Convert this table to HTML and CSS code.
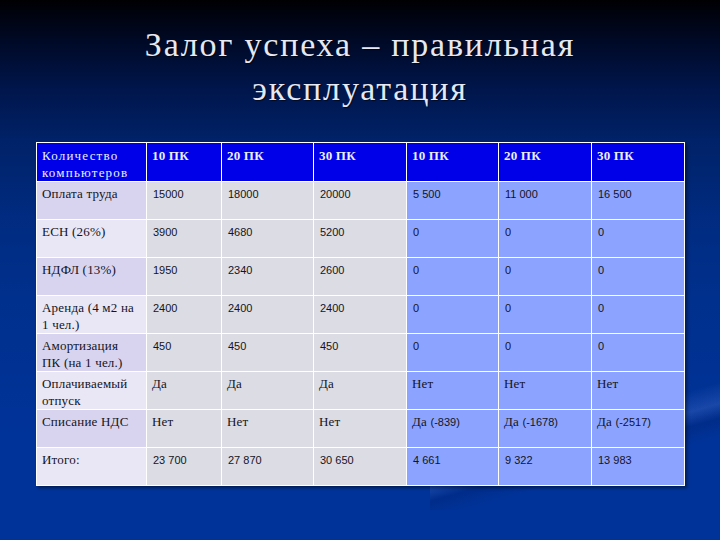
FILE: index.html
```html
<!DOCTYPE html>
<html lang="ru">
<head>
<meta charset="utf-8">
<link rel="stylesheet" href="styles.css">
</head>
<body>
<div class="slide">
  <h1 class="title">Залог успеха – правильная<br>эксплуатация</h1>
  <table class="grid">
    <colgroup>
      <col class="c1"><col class="c2"><col class="c3"><col class="c4"><col class="c5"><col class="c6"><col class="c7">
    </colgroup>
    <tr class="head">
      <td class="lab">Количество<br>компьютеров</td>
      <td>10 ПК</td><td>20 ПК</td><td>30 ПК</td><td>10 ПК</td><td>20 ПК</td><td>30 ПК</td>
    </tr>
    <tr class="odd">
      <td class="lab">Оплата труда</td>
      <td class="num">15000</td><td class="num">18000</td><td class="num">20000</td>
      <td class="alt num">5 500</td><td class="alt num">11 000</td><td class="alt num">16 500</td>
    </tr>
    <tr class="even">
      <td class="lab">ЕСН (26%)</td>
      <td class="num">3900</td><td class="num">4680</td><td class="num">5200</td>
      <td class="alt num">0</td><td class="alt num">0</td><td class="alt num">0</td>
    </tr>
    <tr class="odd">
      <td class="lab">НДФЛ (13%)</td>
      <td class="num">1950</td><td class="num">2340</td><td class="num">2600</td>
      <td class="alt num">0</td><td class="alt num">0</td><td class="alt num">0</td>
    </tr>
    <tr class="even">
      <td class="lab">Аренда (4 м2 на<br>1 чел.)</td>
      <td class="num">2400</td><td class="num">2400</td><td class="num">2400</td>
      <td class="alt num">0</td><td class="alt num">0</td><td class="alt num">0</td>
    </tr>
    <tr class="odd">
      <td class="lab">Амортизация<br>ПК (на 1 чел.)</td>
      <td class="num">450</td><td class="num">450</td><td class="num">450</td>
      <td class="alt num">0</td><td class="alt num">0</td><td class="alt num">0</td>
    </tr>
    <tr class="even">
      <td class="lab">Оплачиваемый<br>отпуск</td>
      <td>Да</td><td>Да</td><td>Да</td>
      <td class="alt">Нет</td><td class="alt">Нет</td><td class="alt">Нет</td>
    </tr>
    <tr class="odd">
      <td class="lab">Списание НДС</td>
      <td>Нет</td><td>Нет</td><td>Нет</td>
      <td class="alt">Да <span class="n">(-839)</span></td><td class="alt">Да <span class="n">(-1678)</span></td><td class="alt">Да <span class="n">(-2517)</span></td>
    </tr>
    <tr class="even">
      <td class="lab">Итого:</td>
      <td class="num">23 700</td><td class="num">27 870</td><td class="num">30 650</td>
      <td class="alt num">4 661</td><td class="alt num">9 322</td><td class="alt num">13 983</td>
    </tr>
  </table>
</div>
</body>
</html>
```

FILE: styles.css
```css
body {
  margin: 0;
  padding: 0;
  width: 720px;
  height: 540px;
  overflow: hidden;
  font-family: "Liberation Serif", serif;
}
.slide {
  width: 720px;
  height: 540px;
  box-sizing: border-box;
  padding-top: 23px;
  background:
    linear-gradient(164deg, rgba(80, 120, 210, 0) 40%, rgba(80, 120, 210, 0.3) 50%, rgba(0, 20, 80, 0.2) 57%, rgba(0, 20, 80, 0) 66%) 430px 380px / 290px 130px no-repeat,
    linear-gradient(180deg, #000003 0%, #000a28 8%, #00154a 16%, #002268 26%, #002b80 40%, #00308d 55%, #003399 80%, #003399 100%);
}
.title {
  margin: 0;
  font-family: "Liberation Serif", serif;
  font-weight: normal;
  font-size: 34px;
  letter-spacing: 1.8px;
  line-height: 44px;
  color: #e6e8f2;
  text-align: center;
  text-shadow: 1px 1px 1px rgba(0, 0, 0, 0.6);
}
.grid {
  margin: 31px 0 0 36px;
  width: 648px;
  border-collapse: collapse;
  table-layout: fixed;
  border: 1px solid #ffffff;
  box-shadow: 2px 2px 3px rgba(0, 0, 0, 0.45);
  font-family: "Liberation Serif", serif;
  font-size: 13px;
  letter-spacing: 0.2px;
  line-height: 17px;
  color: #14141e;
}
.c1 { width: 110px; }
.c2 { width: 75px; }
.c3 { width: 92px; }
.c4 { width: 93px; }
.c5 { width: 92px; }
.c6 { width: 93px; }
.c7 { width: 93px; }
.grid tr {
  height: 38px;
}
.grid td {
  border: 1px solid #ffffff;
  padding: 3px 6px 0 5px;
  vertical-align: top;
  background: #dcdce5;
  overflow: hidden;
  white-space: nowrap;
}
.grid td.alt {
  background: #8ca4ff;
}
.grid tr.odd td.lab {
  background: #d8d4ef;
}
.grid tr.even td.lab {
  background: #e9e7f5;
}
.grid tr.head td {
  background: #0000e8;
  color: #eceef8;
  font-weight: bold;
  padding-top: 4px;
}
.grid tr.head td.lab {
  font-weight: normal;
  letter-spacing: 1.2px;
}
.grid td.num,
.grid .n {
  font-family: "Liberation Sans", sans-serif;
  font-size: 11px;
  letter-spacing: 0;
}
.grid td.num {
  padding-top: 4px;
  padding-left: 6px;
}
```
